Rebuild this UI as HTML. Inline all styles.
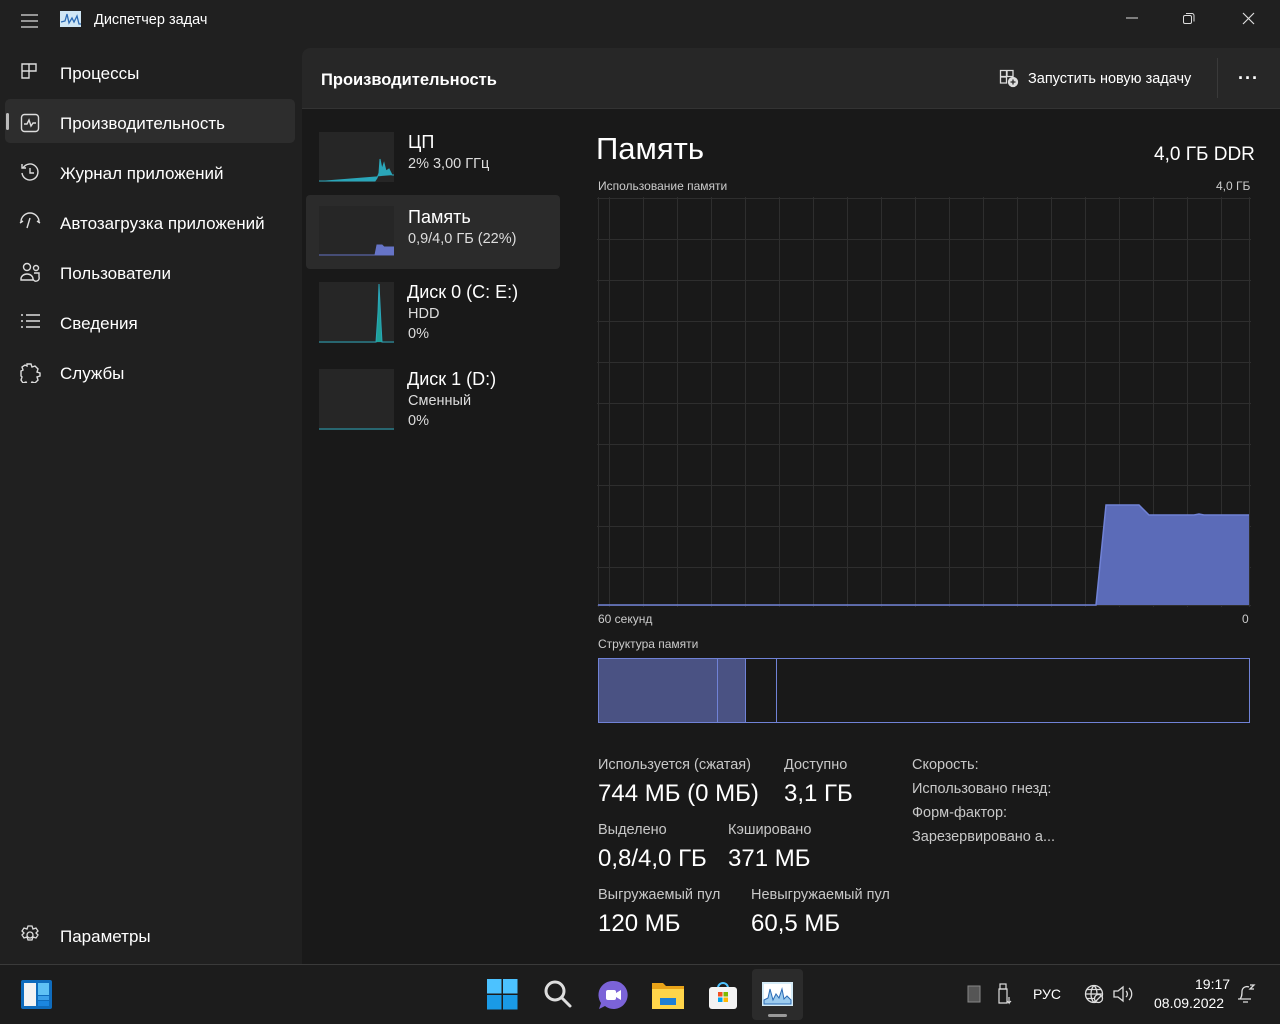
<!DOCTYPE html>
<html><head><meta charset="utf-8"><style>
*{margin:0;padding:0;box-sizing:border-box}
body{width:1280px;height:1024px;background:#202020;font-family:"Liberation Sans","DejaVu Sans",sans-serif;color:#fff;position:relative;overflow:hidden}
.a{position:absolute;white-space:nowrap}
.nav{font-size:17px;color:#fff}
.ic{position:absolute}
.s{font-size:13px;color:#ccc}
.lbl{font-size:14.5px;color:#c8c8c8}
.val{font-size:24px;color:#fff}
</style></head><body>
<!-- title bar -->
<svg class="ic" style="left:20px;top:12px" width="20" height="18"><path d="M1 3h17M1 9h17M1 15h17" stroke="#ddd" stroke-width="1.3"/></svg>
<svg class="ic" style="left:60px;top:11px" width="21" height="16"><rect x="0" y="0" width="21" height="16" fill="#cfe6f5"/><path d="M1 11l4-1 2-7 2 9 3-5 2 4 3-6 2 8h2" stroke="#2b6bb5" stroke-width="1.3" fill="none"/></svg>
<div class="a" style="left:94px;top:12px;font-size:14.5px">Диспетчер задач</div>
<svg class="ic" style="left:1125px;top:12px" width="14" height="14"><path d="M1 6h12" stroke="#ddd"/></svg>
<svg class="ic" style="left:1182px;top:12px" width="14" height="14"><rect x="1.5" y="3.5" width="8" height="8" rx="1.5" stroke="#ddd" fill="none"/><path d="M4 1.5h6a2 2 0 0 1 2 2v6" stroke="#ddd" fill="none"/></svg>
<svg class="ic" style="left:1242px;top:12px" width="14" height="14"><path d="M1 1l11 11M12 1L1 12" stroke="#ddd" stroke-width="1.2"/></svg>

<!-- sidebar -->
<div class="a" style="left:5px;top:99px;width:290px;height:44px;background:#2d2d2d;border-radius:5px"></div>
<div class="a" style="left:6px;top:113px;width:3px;height:17px;background:#bbb;border-radius:2px"></div>
<svg class="ic" style="left:20px;top:62px" width="20" height="20" fill="none" stroke="#ddd" stroke-width="1.4"><path d="M2 2h7v7H2zM9 2h7v7H9zM2 9h7v7H2z"/></svg>
<div class="a nav" style="left:60px;top:64px">Процессы</div>
<svg class="ic" style="left:20px;top:113px" width="20" height="20" fill="none" stroke="#ddd" stroke-width="1.4"><rect x="1.5" y="1.5" width="17" height="17" rx="3"/><path d="M4 11h3l2-4 2 6 2-3h3"/></svg>
<div class="a nav" style="left:60px;top:114px">Производительность</div>
<svg class="ic" style="left:20px;top:162px" width="21" height="21" fill="none" stroke="#ddd" stroke-width="1.4"><path d="M3 6a8 8 0 1 1-1 5"/><path d="M2 2v4h4M10 6v5h4"/></svg>
<div class="a nav" style="left:60px;top:164px">Журнал приложений</div>
<svg class="ic" style="left:18px;top:212px" width="24" height="20" fill="none" stroke="#ddd" stroke-width="1.4"><path d="M3 10a9 9 0 0 1 18 0M12 6l-3 10M2 11l3-2M22 11l-3-2"/></svg>
<div class="a nav" style="left:60px;top:214px;width:209px;overflow:hidden">Автозагрузка приложений</div>
<svg class="ic" style="left:20px;top:262px" width="22" height="20" fill="none" stroke="#ddd" stroke-width="1.4"><circle cx="7" cy="5" r="3.5"/><circle cx="16" cy="6" r="2.5"/><path d="M1 17a6 5 0 0 1 12 0v1H1zM14 11h5v4a3 3 0 0 1-6 2"/></svg>
<div class="a nav" style="left:60px;top:264px">Пользователи</div>
<svg class="ic" style="left:20px;top:313px" width="21" height="16" fill="none" stroke="#ddd" stroke-width="1.4"><path d="M1 2h2M6 2h14M1 8h2M6 8h14M1 14h2M6 14h14"/></svg>
<div class="a nav" style="left:60px;top:314px">Сведения</div>
<svg class="ic" style="left:20px;top:362px" width="21" height="21" fill="none" stroke="#ddd" stroke-width="1.4"><path d="M7 2h4l1 3 3-1 3 3-1 3 3 1v3l-3 1 1 3-3 3-3-1-1 2H7l-1-2-3 1-2-3 1-3-1-1V9l2-1-1-3 3-2 2 1z"/></svg>
<div class="a nav" style="left:60px;top:364px">Службы</div>
<svg class="ic" style="left:20px;top:925px" width="20" height="20" fill="none" stroke="#ddd" stroke-width="1.3"><circle cx="10" cy="10" r="3"/><path d="M8 1h4l1 3 3-1 2 3-2 2 2 2-2 3-3-1-1 3H8l-1-3-3 1-2-3 2-2-2-2 2-3 3 1z"/></svg>
<div class="a nav" style="left:60px;top:927px">Параметры</div>

<!-- main panel -->
<div class="a" style="left:302px;top:48px;width:978px;height:916px;background:#191919;border-top-left-radius:8px;overflow:hidden">
  <div style="height:61px;background:#272727;border-bottom:1px solid #333"></div>
</div>
<div class="a" style="left:321px;top:71px;font-size:16.5px;font-weight:bold">Производительность</div>
<svg class="ic" style="left:999px;top:69px" width="20" height="19" fill="none" stroke="#ddd" stroke-width="1.3"><path d="M1.5 1.5h6v6h-6zM8 1.5h6v6H8zM1.5 8h6v6h-6z"/><circle cx="14" cy="13" r="4.5" fill="#ddd"/><path d="M14 10.5v5M11.5 13h5" stroke="#272727"/></svg>
<div class="a" style="left:1028px;top:71px;font-size:14.5px">Запустить новую задачу</div>
<div class="a" style="left:1217px;top:58px;width:1px;height:40px;background:#3a3a3a"></div>
<div class="a" style="left:1238px;top:68px;font-size:18px;letter-spacing:1px;font-weight:bold">···</div>

<!-- left device list -->
<div class="a" style="left:306px;top:195px;width:254px;height:74px;background:#2b2b2b;border-radius:4px"></div>
<svg class="ic" style="left:319px;top:132px" width="75" height="50"><rect width="75" height="50" fill="#262626"/><path d="M0 49h56l2-3 2-5 1-14 2 10 2-6 2 8 3-2 3 6h2" fill="#2aa6b9" stroke="#2aa6b9"/></svg>
<div class="a" style="left:408px;top:132px;font-size:18px">ЦП</div>
<div class="a" style="left:408px;top:156px;font-size:14.5px;color:#ddd">2% 3,00 ГГц</div>
<svg class="ic" style="left:319px;top:206px" width="75" height="50"><rect width="75" height="50" fill="#262626"/><path d="M0 49h56l2-10h5l2 2h10v8z" fill="#6674c7" stroke="#6674c7"/></svg>
<div class="a" style="left:408px;top:207px;font-size:18px">Память</div>
<div class="a" style="left:408px;top:231px;font-size:14.5px;color:#ddd">0,9/4,0 ГБ (22%)</div>
<svg class="ic" style="left:319px;top:282px" width="75" height="61"><rect width="75" height="61" fill="#262626"/><path d="M0 60h57l2-30 1-28 2 40 1 18h12" fill="#1fa199" stroke="#2aa6b9"/></svg>
<div class="a" style="left:407px;top:282px;font-size:18px">Диск 0 (C: E:)</div>
<div class="a" style="left:408px;top:306px;font-size:14.5px;color:#ddd">HDD</div>
<div class="a" style="left:408px;top:326px;font-size:14.5px;color:#ddd">0%</div>
<svg class="ic" style="left:319px;top:369px" width="75" height="61"><rect width="75" height="61" fill="#262626"/><path d="M0 60h75" stroke="#2aa6b9"/></svg>
<div class="a" style="left:407px;top:369px;font-size:18px">Диск 1 (D:)</div>
<div class="a" style="left:408px;top:393px;font-size:14.5px;color:#ddd">Сменный</div>
<div class="a" style="left:408px;top:413px;font-size:14.5px;color:#ddd">0%</div>

<!-- right detail -->
<div class="a" style="left:596px;top:131px;font-size:31px">Память</div>
<div class="a" style="left:1154px;top:144px;font-size:19px">4,0 ГБ DDR</div>
<div class="a s" style="left:598px;top:179px;font-size:12px">Использование памяти</div>
<div class="a s" style="left:1216px;top:179px;font-size:12px">4,0 ГБ</div>
<svg class="ic" style="left:597px;top:197px" width="654" height="410">
 <g stroke="#2e2e2e" stroke-width="1">
  <path d="M1.5 0v410M652.5 0v410M0 1.5h654M0 408.5h654"/>
  <path d="M12.5 0v410M46.5 0v410M80.5 0v410M114.5 0v410M148.5 0v410M182.5 0v410M216.5 0v410M250.5 0v410M284.5 0v410M318.5 0v410M352.5 0v410M386.5 0v410M420.5 0v410M454.5 0v410M488.5 0v410M522.5 0v410M556.5 0v410M590.5 0v410M624.5 0v410"/>
  <path d="M0 42.5h654M0 83.5h654M0 124.5h654M0 165.5h654M0 206.5h654M0 247.5h654M0 288.5h654M0 329.5h654M0 370.5h654"/>
 </g>
 <path d="M1 408h498l10-100h33l10 10h45l5-1 5 1h45v90H1z" fill="#5b6bb8"/>
 <path d="M1 408h498l10-100h33l10 10h45l5-1 5 1h45" fill="none" stroke="#7082d6" stroke-width="1.5"/>
</svg>
<div class="a s" style="left:598px;top:612px;font-size:12px">60 секунд</div>
<div class="a s" style="left:1242px;top:612px;font-size:12px">0</div>
<div class="a s" style="left:598px;top:637px;font-size:12px">Структура памяти</div>
<div class="a" style="left:598px;top:658px;width:652px;height:65px;border:1px solid #7082d6"></div>
<div class="a" style="left:599px;top:659px;width:119px;height:63px;background:#4a5283;border-right:1px solid #7082d6"></div>
<div class="a" style="left:718px;top:659px;width:28px;height:63px;background:#4a5283;border-right:1px solid #7082d6"></div>
<div class="a" style="left:776px;top:659px;width:1px;height:63px;background:#7082d6"></div>

<div class="a lbl" style="left:598px;top:757px">Используется (сжатая)</div>
<div class="a val" style="left:598px;top:780px">744 МБ (0 МБ)</div>
<div class="a lbl" style="left:784px;top:757px">Доступно</div>
<div class="a val" style="left:784px;top:780px">3,1 ГБ</div>
<div class="a lbl" style="left:598px;top:822px">Выделено</div>
<div class="a val" style="left:598px;top:845px">0,8/4,0 ГБ</div>
<div class="a lbl" style="left:728px;top:822px">Кэшировано</div>
<div class="a val" style="left:728px;top:845px">371 МБ</div>
<div class="a lbl" style="left:598px;top:887px">Выгружаемый пул</div>
<div class="a val" style="left:598px;top:910px">120 МБ</div>
<div class="a lbl" style="left:751px;top:887px">Невыгружаемый пул</div>
<div class="a val" style="left:751px;top:910px">60,5 МБ</div>
<div class="a lbl" style="left:912px;top:757px">Скорость:</div>
<div class="a lbl" style="left:912px;top:781px">Использовано гнезд:</div>
<div class="a lbl" style="left:912px;top:805px">Форм-фактор:</div>
<div class="a lbl" style="left:912px;top:829px">Зарезервировано а...</div>

<!-- taskbar -->
<div class="a" style="left:0;top:964px;width:1280px;height:60px;background:#1c1c1c;border-top:1px solid #3a3a3a"></div>
<svg class="ic" style="left:21px;top:980px" width="31" height="29"><rect width="31" height="29" rx="2" fill="#0f6cbd"/><rect x="3" y="3" width="12" height="23" fill="#f3f3f3"/><rect x="17" y="3" width="11" height="12" fill="#5fc1f5"/><rect x="17" y="16" width="11" height="4" fill="#3aa0ea"/><rect x="17" y="21" width="11" height="5" fill="#1b86e0"/></svg>
<svg class="ic" style="left:487px;top:979px" width="31" height="31"><rect x="0" y="0" width="14.5" height="14.5" fill="#4cc2ff"/><rect x="16" y="0" width="14.5" height="14.5" fill="#4cc2ff"/><rect x="0" y="16" width="14.5" height="14.5" fill="#1a9ae6"/><rect x="16" y="16" width="14.5" height="14.5" fill="#1a9ae6"/></svg>
<svg class="ic" style="left:543px;top:979px" width="30" height="30" fill="none" stroke="#ddd" stroke-width="3"><circle cx="12" cy="12" r="9"/><path d="M19 19l8 8" stroke-linecap="round"/></svg>
<svg class="ic" style="left:598px;top:980px" width="30" height="30"><path d="M15 1a14 14 0 1 1-8 25l-6 3 2-6A14 14 0 0 1 15 1z" fill="#7b63d8"/><rect x="8" y="10" width="10" height="10" rx="2" fill="#fff"/><path d="M18 13l5-3v10l-5-3z" fill="#fff"/></svg>
<svg class="ic" style="left:652px;top:981px" width="32" height="28"><path d="M0 2h11l3 3h18v23H0z" fill="#e9a318"/><rect x="0" y="8" width="32" height="20" fill="#ffd54a"/><rect x="8" y="17" width="16" height="7" fill="#1e7fd6"/></svg>
<svg class="ic" style="left:708px;top:980px" width="30" height="30"><path d="M10 8a5 5 0 0 1 10 0" stroke="#4cc2ff" stroke-width="2" fill="none"/><rect x="1" y="7" width="28" height="22" rx="3" fill="#f3f3f3"/><rect x="10" y="12" width="4.5" height="4.5" fill="#f25022"/><rect x="15.5" y="12" width="4.5" height="4.5" fill="#7fba00"/><rect x="10" y="17.5" width="4.5" height="4.5" fill="#00a4ef"/><rect x="15.5" y="17.5" width="4.5" height="4.5" fill="#ffb900"/></svg>
<div class="a" style="left:752px;top:969px;width:51px;height:51px;background:#2b2b2b;border-radius:4px"></div>
<svg class="ic" style="left:762px;top:982px" width="31" height="24"><rect width="31" height="24" fill="#d5ecf8"/><rect x="2" y="2" width="27" height="20" fill="#fff"/><path d="M2 18l4-2 2-9 3 11 3-6 3 4 3-9 2 10 3-3 4 4v4H2z" fill="#9ccbee" stroke="#2b6bb5" stroke-width="1"/></svg>
<div class="a" style="left:768px;top:1014px;width:19px;height:3px;background:#999;border-radius:2px"></div>
<svg class="ic" style="left:967px;top:985px" width="14" height="18"><rect x="1" y="1" width="12" height="16" fill="#555" stroke="#888"/></svg>
<svg class="ic" style="left:997px;top:983px" width="16" height="22" fill="none" stroke="#ddd" stroke-width="1.2"><rect x="3" y="1" width="6" height="5"/><path d="M2 6h8v14H2zM12 14v6l-2-2M12 20l2-2"/></svg>
<div class="a" style="left:1033px;top:986px;font-size:14px">РУС</div>
<svg class="ic" style="left:1084px;top:984px" width="20" height="20" fill="none" stroke="#ddd" stroke-width="1.3"><circle cx="10" cy="10" r="8.5"/><path d="M1.5 10h17M10 1.5c-4 4-4 13 0 17M10 1.5c4 4 4 13 0 17M3 5.5h14M3 14.5h14"/><circle cx="14.5" cy="14.5" r="4" fill="#1c1c1c"/><path d="M12 17l5-5"/></svg>
<svg class="ic" style="left:1113px;top:985px" width="22" height="18" fill="none" stroke="#ddd" stroke-width="1.3"><path d="M1 6h4l5-4v14l-5-4H1z"/><path d="M13 6a4 4 0 0 1 0 6M16 3a8 8 0 0 1 0 12"/></svg>
<div class="a" style="left:1195px;top:976px;font-size:14px">19:17</div>
<div class="a" style="left:1154px;top:995px;font-size:14px">08.09.2022</div>
<svg class="ic" style="left:1237px;top:983px" width="20" height="22" fill="none" stroke="#ddd" stroke-width="1.3"><path d="M3 16c2-2 2-5 2-8a5 5 0 0 1 7-4M1 16h13M6 19h5M13 2h4l-4 4h4"/></svg>
</body></html>
